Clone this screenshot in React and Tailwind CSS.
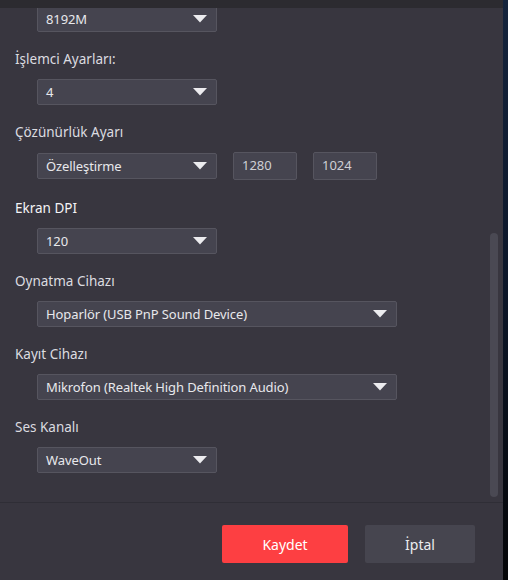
import React from "react";

const Arrow = () => (
  <svg width="14" height="8" viewBox="0 0 14 8" className="shrink-0">
    <path d="M0 0 H14 L7 7.5 Z" fill="#ececef" />
  </svg>
);

const Select = ({ value, wide }) => (
  <div
    className={`${wide ? "w-[360px]" : "w-[180px]"} h-[26px] ml-[37px] flex items-center justify-between pl-[8px] pr-[9px] bg-[#45444f] border border-[#56555f] rounded-[2px] text-[13px] text-[#e8e8ec]`}
  >
    <span className="leading-none tracking-[-0.1px]">{value}</span>
    <Arrow />
  </div>
);

const Label = ({ children, bright }) => (
  <div
    className={`h-[20px] leading-[20px] pl-[15px] text-[13.5px] ${bright ? "text-[#f4f4f6]" : "text-[#dcdce0]"}`}
  >
    {children}
  </div>
);

export default function App() {
  return (
    <div
      className="w-[508px] h-[580px] flex bg-[#38363f] overflow-hidden"
      style={{ fontFamily: '"Noto Sans", "Open Sans", sans-serif' }}
    >
      <div className="w-[503px] h-full flex flex-col relative">
        <div className="h-[8px] bg-[#2c2b30] shrink-0 relative z-10" />
        <div className="h-[494px] overflow-hidden shrink-0">
          <div className="-mt-[2px] flex flex-col">
            <Select value="8192M" />
            <div className="mt-[17px]">
              <Label>İşlemci Ayarları:</Label>
              <div className="mt-[10px]">
                <Select value="4" />
              </div>
            </div>
            <div className="mt-[17px]">
              <Label>Çözünürlük Ayarı</Label>
              <div className="mt-[10px] flex items-center gap-[16px]">
                <Select value="Özelleştirme" />
                <div className="w-[64px] h-[28px] bg-[#45444f] border border-[#56555f] rounded-[2px] pl-[8px] flex items-center text-[13px] text-[#cfcfd4]">
                  1280
                </div>
                <div className="w-[64px] h-[28px] bg-[#45444f] border border-[#56555f] rounded-[2px] pl-[8px] flex items-center text-[13px] text-[#cfcfd4]">
                  1024
                </div>
              </div>
            </div>
            <div className="mt-[18px]">
              <Label bright>Ekran DPI</Label>
              <div className="mt-[10px]">
                <Select value="120" />
              </div>
            </div>
            <div className="mt-[17px]">
              <Label>Oynatma Cihazı</Label>
              <div className="mt-[10px]">
                <Select wide value="Hoparlör (USB PnP Sound Device)" />
              </div>
            </div>
            <div className="mt-[17px]">
              <Label>Kayıt Cihazı</Label>
              <div className="mt-[10px]">
                <Select wide value="Mikrofon (Realtek High Definition Audio)" />
              </div>
            </div>
            <div className="mt-[17px]">
              <Label>Ses Kanalı</Label>
              <div className="mt-[10px]">
                <Select value="WaveOut" />
              </div>
            </div>
          </div>
        </div>
        <div className="h-px bg-[#2f2e36] shrink-0" />
        <div className="flex justify-end gap-[17px] pr-[28px] pt-[22px]">
          <button className="w-[126px] h-[38px] rounded-[2px] bg-[#fd3f42] text-white text-[14px]">
            Kaydet
          </button>
          <button className="w-[110px] h-[38px] rounded-[2px] bg-[#46454f] text-[#ececf0] text-[14px]">
            İptal
          </button>
        </div>
        <div className="absolute left-[490px] top-[233px] w-[8px] h-[264px] rounded-full bg-[#4a4953]" />
      </div>
      <div className="w-[5px] h-full bg-gradient-to-b from-[#15243c] via-[#0c1628] to-[#050608]" />
    </div>
  );
}
